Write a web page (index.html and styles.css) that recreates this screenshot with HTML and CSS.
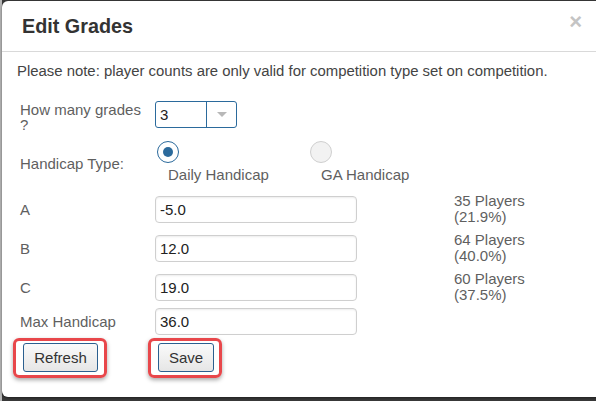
FILE: index.html
```html
<!DOCTYPE html>
<html>
<head>
<meta charset="utf-8">
<link rel="stylesheet" href="styles.css">
</head>
<body>
<div class="backdrop">
  <div class="modal">
    <div class="modal-header">
      <h4 class="modal-title">Edit Grades</h4>
      <span class="close">&times;</span>
    </div>
    <div class="modal-body">
      <p class="note">Please note: player counts are only valid for competition type set on competition.</p>
      <div class="form">
        <div class="row row-grades">
          <label class="lbl">How many grades ?</label>
          <div class="select">
            <span class="select-value">3</span>
            <span class="select-arrow"><span class="tri"></span></span>
          </div>
        </div>
        <div class="row row-radio">
          <label class="lbl lbl-radio">Handicap Type:</label>
          <div class="radio-group">
            <div class="radio-opt">
              <span class="radio checked"><span class="dot"></span></span>
              <span class="radio-text">Daily Handicap</span>
            </div>
            <div class="radio-opt">
              <span class="radio"></span>
              <span class="radio-text">GA Handicap</span>
            </div>
          </div>
        </div>
        <div class="row row-grade">
          <label class="lbl">A</label>
          <div class="input">-5.0</div>
          <div class="count">35 Players<br>(21.9%)</div>
        </div>
        <div class="row row-grade">
          <label class="lbl">B</label>
          <div class="input">12.0</div>
          <div class="count">64 Players<br>(40.0%)</div>
        </div>
        <div class="row row-grade row-last">
          <label class="lbl">C</label>
          <div class="input">19.0</div>
          <div class="count">60 Players<br>(37.5%)</div>
        </div>
        <div class="row row-max">
          <label class="lbl">Max Handicap</label>
          <div class="input">36.0</div>
        </div>
        <div class="buttons">
          <div class="hl hl-refresh"><button class="btn">Refresh</button></div>
          <div class="hl hl-save"><button class="btn">Save</button></div>
        </div>
      </div>
    </div>
  </div>
</div>
</body>
</html>
```
FILE: styles.css
```css
html, body {
  margin: 0;
  padding: 0;
}
body {
  width: 596px;
  height: 401px;
  overflow: hidden;
  background: #3a3a3a;
  font-family: "Liberation Sans", Arial, sans-serif;
}
.backdrop {
  height: 401px;
  padding-top: 1px;
  padding-left: 2px;
  box-sizing: border-box;
  background: linear-gradient(to right, #b9b9b9 0, #b9b9b9 2px, transparent 2px);
}
.modal {
  width: 600px;
  height: 396px;
  background: #fff;
  border-radius: 6px;
  box-shadow: 0 1px 3px rgba(0,0,0,0.5);
  overflow: hidden;
}
.modal-header {
  height: 50px;
  border-bottom: 1px solid #d9d9d9;
  display: flex;
  align-items: center;
  justify-content: space-between;
  padding: 0 16px 0 20px;
}
.modal-title {
  margin: 0;
  font-size: 19.8px;
  font-weight: bold;
  color: #333;
  padding-top: 1px;
}
.close {
  font-size: 22px;
  font-weight: bold;
  color: #c4c4c4;
  line-height: 1;
  margin-right: 4px;
  margin-top: -8px;
}
.modal-body {
  padding: 11px 0 0 15px;
}
.note {
  margin: 0;
  font-size: 14.9px;
  color: #444;
  line-height: 16px;
}
.form {
  margin-top: 22px;
}
.row {
  display: flex;
  align-items: flex-start;
}
.lbl {
  width: 138px;
  padding-left: 3px;
  box-sizing: border-box;
  font-size: 15px;
  color: #5f5f5f;
  line-height: 15px;
}
.row-grades {
  height: 40px;
}
.row-grades .lbl {
  padding-top: 1px;
  padding-right: 6px;
}
.select {
  width: 82px;
  height: 27px;
  box-sizing: border-box;
  border: 1px solid #2b6a9c;
  border-radius: 3px;
  display: flex;
}
.select-value {
  flex: 1;
  font-size: 15px;
  color: #222;
  line-height: 25px;
  padding-left: 4px;
  border-right: 1px solid #2b6a9c;
}
.select-arrow {
  width: 29px;
  display: flex;
  align-items: center;
  justify-content: center;
}
.tri {
  width: 0;
  height: 0;
  border-left: 5px solid transparent;
  border-right: 5px solid transparent;
  border-top: 5px solid #b8b8b8;
}
.row-radio {
  height: 55px;
}
.lbl-radio {
  padding-top: 15px;
}
.radio-group {
  display: flex;
  margin-left: 2px;
}
.radio-opt {
  width: 153px;
  display: flex;
  flex-direction: column;
}
.radio {
  width: 22px;
  height: 22px;
  box-sizing: border-box;
  border-radius: 50%;
  border: 1px solid #cfcfcf;
  background: #f2f2f2;
  display: flex;
  align-items: center;
  justify-content: center;
}
.radio.checked {
  border: 1.5px solid #2b6a9c;
  background: #fff;
}
.dot {
  width: 10px;
  height: 10px;
  border-radius: 50%;
  background: #2b6a9c;
}
.radio-text {
  margin-left: 11px;
  margin-top: 4px;
  font-size: 15px;
  color: #5f5f5f;
  line-height: 16px;
}
.row-grade {
  height: 39px;
}
.row-grade.row-last {
  height: 34px;
}
.row-grade .lbl, .row-max .lbl {
  padding-top: 6px;
}
.input {
  width: 202px;
  height: 27px;
  box-sizing: border-box;
  border: 1px solid #cfcfcf;
  border-radius: 4px;
  box-shadow: inset 0 1px 2px rgba(0,0,0,0.08);
  font-size: 15px;
  color: #222;
  line-height: 25px;
  padding-left: 4px;
}
.count {
  margin-left: 97px;
  margin-top: -3px;
  font-size: 15px;
  color: #5f5f5f;
  line-height: 16px;
}
.row-max {
  height: 30px;
}
.buttons {
  display: flex;
  margin-left: -4px;
}
.hl {
  border: 3px solid #e8474b;
  border-radius: 6px;
  padding: 2px 6px 3px 7px;
  box-shadow: 0 2px 4px rgba(0,0,0,0.35);
}
.hl-save {
  margin-left: 41px;
  padding-right: 5px;
}
.btn {
  display: block;
  height: 29px;
  border: 1px solid #2b5f8f;
  border-radius: 3px;
  background: linear-gradient(#fafafa, #e6e6e6);
  font-family: "Liberation Sans", Arial, sans-serif;
  font-size: 15px;
  color: #333;
  padding: 0 6px;
}
.hl-refresh .btn {
  width: 75px;
}
.hl-save .btn {
  width: 56px;
}
```
